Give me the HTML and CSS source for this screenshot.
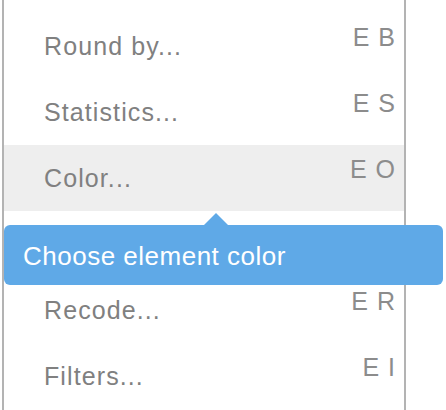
FILE: index.html
```html
<!DOCTYPE html>
<html>
<head>
<meta charset="utf-8">
<link rel="stylesheet" href="styles.css">
</head>
<body>
<div class="menu">
  <div class="item"><span class="label">Round by...</span><span class="key">E B</span></div>
  <div class="item"><span class="label">Statistics...</span><span class="key">E S</span></div>
  <div class="item active"><span class="label">Color...</span><span class="key">E O</span></div>
  <div class="item"></div>
  <div class="item"><span class="label">Recode...</span><span class="key">E R</span></div>
  <div class="item"><span class="label">Filters...</span><span class="key">E I</span></div>
</div>
<div class="tooltip">Choose element color</div>
</body>
</html>
```

FILE: styles.css
```css
html, body {
  margin: 0;
  padding: 0;
  background: #ffffff;
  overflow: hidden;
}
body {
  width: 446px;
  height: 410px;
  position: relative;
  font-family: "Liberation Sans", Arial, sans-serif;
}
.menu {
  margin-left: 2px;
  width: 400px;
  height: 410px;
  border-left: 2px solid #b3b3b3;
  border-right: 2px solid #b3b3b3;
  padding-top: 13px;
  box-sizing: content-box;
}
.item {
  height: 66px;
  display: flex;
  align-items: center;
  justify-content: space-between;
  padding: 0 8px 0 40px;
}
.item.active {
  background: #eeeeee;
}
.label {
  font-size: 25px;
  letter-spacing: 1.1px;
  color: #808080;
}
.key {
  font-size: 25px;
  letter-spacing: 1px;
  color: #8c8c8c;
  margin-bottom: 18px;
}
.tooltip {
  position: absolute;
  left: 4px;
  top: 225px;
  width: 439px;
  height: 60px;
  box-sizing: border-box;
  background: #5fa9e7;
  border-radius: 6px;
  color: #ffffff;
  font-size: 26px;
  letter-spacing: 0.5px;
  padding-left: 19px;
  padding-top: 2px;
  display: flex;
  align-items: center;
}
.tooltip::before {
  content: "";
  position: absolute;
  left: 200px;
  top: -12px;
  border-left: 12px solid transparent;
  border-right: 12px solid transparent;
  border-bottom: 12px solid #5fa9e7;
}
```
